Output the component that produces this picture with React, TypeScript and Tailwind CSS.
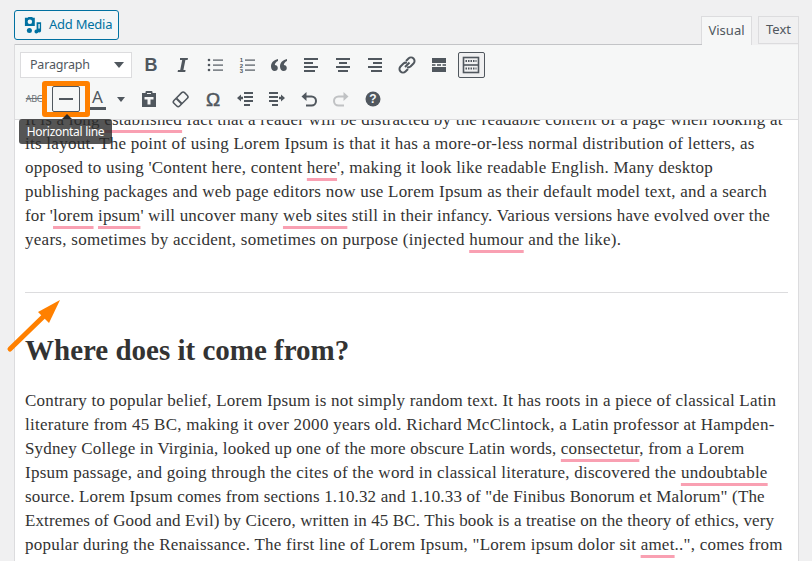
import type { ReactNode } from 'react';

const Bad = ({ children }: { children: ReactNode }) => (
  <span className="underline decoration-[#f9a0b2] decoration-[3px] underline-offset-[5px] [text-decoration-skip-ink:none]">
    {children}
  </span>
);

const Line = ({ children, track }: { children: ReactNode; track: string }) => (
  <div className={`h-6 whitespace-nowrap ${track}`}>{children}</div>
);

const Icon = ({ children, muted }: { children: ReactNode; muted?: boolean }) => (
  <svg
    viewBox="0 0 20 20"
    className={`h-5 w-5 ${muted ? 'fill-[#c0c2c4] text-[#c0c2c4]' : 'fill-[#50575e] text-[#50575e]'}`}
  >
    {children}
  </svg>
);

const Cell = ({ children }: { children: ReactNode }) => (
  <div className="flex h-[26px] w-8 items-center justify-center">{children}</div>
);

const Rows = ({ rows }: { rows: number[][] }) => (
  <>
    {rows.map(([x, y, w], i) => (
      <rect key={i} x={x} y={y} width={w} height="2" />
    ))}
  </>
);

const row1 = [
  <text key="b" x="10" y="16" textAnchor="middle" className="font-['Liberation_Sans'] text-[18px] font-bold">B</text>,
  <path key="i" d="M7 3h8l-.4 2h-2.200l-2 10h2.200l-.4 2H4.600l.4-2h2.200l2-10H7z" />,
  <g key="ul">
    <circle cx="4" cy="5" r="1.300" /><circle cx="4" cy="10" r="1.300" /><circle cx="4" cy="15" r="1.300" />
    <rect x="8" y="4.500" width="10" height="1.200" /><rect x="8" y="9.500" width="10" height="1.200" /><rect x="8" y="14.500" width="10" height="1.200" />
  </g>,
  <g key="ol">
    <text x="4.500" y="7" textAnchor="middle" className="font-['Liberation_Sans'] text-[6px] font-bold">1</text>
    <text x="4.500" y="12.500" textAnchor="middle" className="font-['Liberation_Sans'] text-[6px] font-bold">2</text>
    <text x="4.500" y="18" textAnchor="middle" className="font-['Liberation_Sans'] text-[6px] font-bold">3</text>
    <rect x="8" y="4.500" width="10" height="1.200" /><rect x="8" y="9.500" width="10" height="1.200" /><rect x="8" y="14.500" width="10" height="1.200" />
  </g>,
  <path key="q" d="M9 4C5 4.800 2 7.600 2 11.400 2 14 3.500 16 5.600 16c1.900 0 3.200-1.400 3.200-3.100 0-1.800-1.300-3-3-3 .3-1.900 1.700-3.300 3.200-3.900zM18 4c-4 .8-7 3.600-7 7.400 0 2.600 1.500 4.600 3.600 4.600 1.900 0 3.200-1.400 3.200-3.100 0-1.800-1.300-3-3-3 .3-1.900 1.700-3.300 3.200-3.900z" />,
  <Rows key="al" rows={[[3, 3, 14], [3, 7, 9], [3, 11, 14], [3, 15, 11]]} />,
  <Rows key="ac" rows={[[3, 3, 14], [6, 7, 8], [3, 11, 14], [5, 15, 10]]} />,
  <Rows key="ar" rows={[[3, 3, 14], [8, 7, 9], [3, 11, 14], [6, 15, 11]]} />,
  <g key="ln" fill="none" stroke="currentColor" strokeWidth="2">
    <path d="M8 12l4.500-4.500" />
    <path d="M9 6l2.500-2.500a3.300 3.300 0 0 1 5 5l-3 3a3.300 3.300 0 0 1-3.400.6" />
    <path d="M11 14l-2.500 2.500a3.300 3.300 0 0 1-5-5l3-3a3.300 3.300 0 0 1 3.400-.6" />
  </g>,
  <g key="mo">
    <rect x="3" y="3" width="14" height="5" />
    <rect x="3" y="12" width="14" height="5" />
    <rect x="3" y="9.200" width="3.500" height="1.600" /><rect x="8" y="9.200" width="4" height="1.600" /><rect x="13.500" y="9.200" width="3.500" height="1.600" />
  </g>,
];

const row2 = [
  <path key="pa" fillRule="evenodd" d="M3 4h3.500V3a1 1 0 0 1 1-1h5a1 1 0 0 1 1 1v1H17v14H3zM8 4v1h4V4zM5.500 8v2.500h3V15.500h3v-5h3V8z" />,
  <g key="er" fill="none" stroke="currentColor" strokeWidth="1.500">
    <rect x="6" y="3" width="8" height="15" rx="2" transform="rotate(45 10 10)" />
    <path d="M5.500 9.500l5.500 5.500" strokeWidth="2" />
  </g>,
  <text key="om" x="10" y="16.500" textAnchor="middle" stroke="currentColor" strokeWidth="0.500" className="font-['Liberation_Sans'] text-[19px]">Ω</text>,
  <g key="ou">
    <Rows rows={[[9, 3, 9], [9, 7, 9], [9, 11, 9], [9, 15, 6]]} />
    <path d="M2 9l4-3.500v2.300h2v2.400H6v2.300z" />
  </g>,
  <g key="in">
    <Rows rows={[[2, 3, 9], [2, 7, 9], [2, 11, 9], [5, 15, 6]]} />
    <path d="M18 9l-4 3.500v-2.300h-2V7.800h2V5.500z" />
  </g>,
];

const Toolbar = () => (
  <div className="relative z-10 h-[75px] shrink-0 border-b border-[#dcdcde] bg-[#f6f7f7] pl-[5px] pt-[7px]">
    <div className="flex h-[26px] items-center">
      <div className="mr-[3px] flex h-[26px] w-[112px] items-center justify-between border border-[#dcdcde] bg-white pl-[9px] pr-[7px] text-[12.5px] tracking-[-0.2px] text-[#50575e]">
        Paragraph
        <span className="h-0 w-0 border-x-[5px] border-t-[6px] border-x-transparent border-t-[#50575e]" />
      </div>
      {row1.map((glyph, i) => (
        <Cell key={i}>
          <Icon>{glyph}</Icon>
        </Cell>
      ))}
      <Cell>
        <div className="flex h-[26px] w-[27px] items-center justify-center rounded-[2px] border border-[#50575e] bg-[#f0f0f1]">
          <Icon>
            <g fill="none" stroke="currentColor" strokeWidth="1.600">
              <rect x="2.500" y="2.500" width="15" height="15" />
              <path d="M2 10h16" />
              <path d="M4.500 6h11M4.500 13.500h11" strokeDasharray="1.500 1" strokeWidth="2.200" />
            </g>
          </Icon>
        </div>
      </Cell>
    </div>
    <div className="-ml-[2px] mt-[8px] flex h-[26px] items-center">
      <Cell>
        <span className="text-[9px] tracking-[-0.3px] text-[#6b7176] line-through">ABC</span>
      </Cell>
      <Cell>
        <div className="flex h-[26px] w-[28px] items-center justify-center rounded-[2px] border border-[#50575e]">
          <span className="h-[2px] w-[14px] bg-[#50575e]" />
        </div>
      </Cell>
      <div className="flex h-[26px] w-[51px] items-center pl-[6px]">
        <div className="flex w-[19px] flex-col items-center text-[#50575e]">
          <span className="text-[17px] leading-[18px]">A</span>
          <span className="mt-[1px] h-[3px] w-[17px] bg-[#50575e]" />
        </div>
        <span className="ml-[10px] h-0 w-0 border-x-[4px] border-t-[5px] border-x-transparent border-t-[#50575e]" />
      </div>
      {row2.map((glyph, i) => (
        <Cell key={i}>
          <Icon>{glyph}</Icon>
        </Cell>
      ))}
      <Cell>
        <Icon>
          <path d="M2.500 7.500l5-4.500v9z" />
          <path fill="none" stroke="currentColor" strokeWidth="2" d="M6 7.500h6.500a4.500 4.500 0 0 1 0 9H7" />
        </Icon>
      </Cell>
      <Cell>
        <Icon muted>
          <path d="M17.500 7.500l-5-4.500v9z" />
          <path fill="none" stroke="currentColor" strokeWidth="2" d="M14 7.500H7.500a4.500 4.500 0 0 0 0 9H13" />
        </Icon>
      </Cell>
      <Cell>
        <Icon>
          <circle cx="10" cy="10" r="7.500" />
          <text x="10" y="14" textAnchor="middle" fill="#f6f7f7" className="font-['Liberation_Sans'] text-[12px] font-bold">?</text>
        </Icon>
      </Cell>
    </div>
  </div>
);

export default function App() {
  return (
    <div className="relative flex h-[561px] w-[812px] flex-col overflow-hidden bg-[#f0f0f1] font-['Noto_Sans',sans-serif]">
      <div className="flex h-[44px] shrink-0 items-start justify-between pl-[14px] pr-[13px]">
        <button className="mt-[10px] flex h-[30px] w-[105px] items-center gap-[7px] rounded-[3px] border border-[#0071a1] bg-[#f3f5f6] pl-[9px] text-[13px] tracking-[-0.25px] text-[#0071a1]">
          <svg viewBox="0 0 20 20" className="h-[18px] w-[18px] fill-[#0071a1]">
            <path fillRule="evenodd" d="M1 2h3l1-1h4l1 1h2v9H1zM6.500 4a2.500 2.500 0 1 0 0 5 2.500 2.500 0 0 0 0-5z" />
            <path d="M14 7h5v9a2.200 2.200 0 1 1-1.500-2V9H16v8a2.200 2.200 0 1 1-2-2z" />
            <circle cx="6" cy="16" r="2.800" />
          </svg>
          Add Media
        </button>
        <div className="mt-[16px] flex items-start gap-[6px] text-[13px] text-[#50575e]">
          <div className="flex h-[29px] w-[51px] items-center justify-center border border-b-0 border-[#dcdcde] bg-[#f6f7f7]">Visual</div>
          <div className="flex h-[28px] w-[41px] items-center justify-center border border-[#dcdcde] bg-[#f0f0f1]">Text</div>
        </div>
      </div>

      <div className="ml-[14px] mr-[13px] flex min-h-0 flex-1 flex-col border-x border-t-0 border-[#dcdcde]">
        <div className="h-0 w-[687px] shrink-0 border-t border-[#c3c4c7]" />
        <Toolbar />
        <div className="-mt-[12px] min-h-0 flex-1 overflow-hidden bg-white pl-[10px] font-['Liberation_Serif',serif] text-[17px] leading-6 text-[#333]">
          <Line track="tracking-[0.21px]">It is a long <Bad>established</Bad> fact that a reader will be distracted by the readable content of a page when looking at</Line>
          <Line track="tracking-[0.26px]">its layout. The point of using Lorem Ipsum is that it has a more-or-less normal distribution of letters, as</Line>
          <Line track="tracking-[0.23px]">opposed to using 'Content here, content <Bad>here</Bad>', making it look like readable English. Many desktop</Line>
          <Line track="tracking-[0.24px]">publishing packages and web page editors now use Lorem Ipsum as their default model text, and a search</Line>
          <Line track="tracking-[0.175px]">for '<Bad>lorem</Bad> <Bad>ipsum</Bad>' will uncover many <Bad>web sites</Bad> still in their infancy. Various versions have evolved over the</Line>
          <Line track="tracking-[0.27px]">years, sometimes by accident, sometimes on purpose (injected <Bad>humour</Bad> and the like).</Line>
          <div className="mr-[10px] mt-[40px] border-t border-[#dcdcde]" />
          <h2 className="mt-[41px] h-[32px] text-[29px] font-bold leading-8">Where does it come from?</h2>
          <div className="mt-[23px]">
            <Line track="tracking-[0.2px]">Contrary to popular belief, Lorem Ipsum is not simply random text. It has roots in a piece of classical Latin</Line>
            <Line track="tracking-[0.26px]">literature from 45 BC, making it over 2000 years old. Richard McClintock, a Latin professor at Hampden-</Line>
            <Line track="tracking-[0.16px]">Sydney College in Virginia, looked up one of the more obscure Latin words, <Bad>consectetur</Bad>, from a Lorem</Line>
            <Line track="tracking-[0.25px]">Ipsum passage, and going through the cites of the word in classical literature, discovered the <Bad>undoubtable</Bad></Line>
            <Line track="tracking-[0.15px]">source. Lorem Ipsum comes from sections 1.10.32 and 1.10.33 of "de Finibus Bonorum et Malorum" (The</Line>
            <Line track="tracking-[0.11px]">Extremes of Good and Evil) by Cicero, written in 45 BC. This book is a treatise on the theory of ethics, very</Line>
            <Line track="tracking-[0.23px]">popular during the Renaissance. The first line of Lorem Ipsum, "Lorem ipsum dolor sit <Bad>amet</Bad>..", comes from</Line>
          </div>
        </div>
      </div>

      {/* callout over the hr button */}
      <div className="absolute left-[42px] top-[81px] z-20 h-[36px] w-[48px] rounded-[3px] border-[5px] border-[#ff8000]" />
      <div className="absolute left-[19px] top-[119px] z-20 flex h-[25px] w-[93px] items-center justify-center rounded-[3px] bg-[#2a2a2a]/80 text-[12px] tracking-[-0.3px] text-white">
        Horizontal line
        <span className="absolute -top-[5px] left-[43px] h-0 w-0 border-x-[5px] border-b-[5px] border-x-transparent border-b-[#2a2a2a]" />
      </div>
      <svg className="absolute left-0 top-[290px] z-20 h-[70px] w-[70px]" viewBox="0 0 70 70">
        <path d="M10 59L44 26" stroke="#ff8000" strokeWidth="5" strokeLinecap="round" />
        <path d="M60 10L38 22L49 33z" fill="#ff8000" />
      </svg>
    </div>
  );
}
